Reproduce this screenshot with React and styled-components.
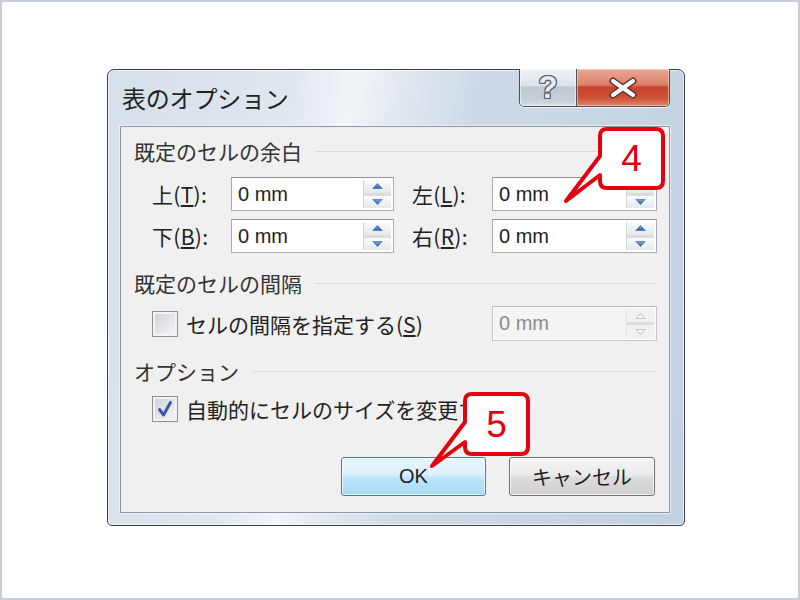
import React from "react";
import styled, { createGlobalStyle } from "styled-components";

const JP = `"Noto Sans CJK JP", "Noto Sans", sans-serif`;
const LAT = `"Liberation Sans", Arial, "Noto Sans CJK JP", sans-serif`;

const Global = createGlobalStyle`
  html, body { margin: 0; padding: 0; background: #fff; }
  #root { width: 800px; height: 600px; }
`;

const Page = styled.div`
  position: relative;
  width: 800px;
  height: 600px;
  box-sizing: border-box;
  border: 2px solid #c7cfdc;
  padding: 67px 0 0 105px;
  background: #fff;
  font-family: ${JP};
  overflow: hidden;
`;

const Window = styled.div`
  width: 578px;
  height: 457px;
  box-sizing: border-box;
  border: 1px solid #3c3f44;
  border-radius: 7px 7px 5px 5px;
  background: linear-gradient(
    100deg,
    #d6e0ea 0%,
    #dfe7ef 28%,
    #f1f5f8 38%,
    #e3eaf1 44%,
    #cfdbe7 56%,
    #c2d1e0 100%
  );
  box-shadow: inset 0 0 0 1px rgba(255, 255, 255, 0.6);
  display: flex;
  flex-direction: column;
  padding: 0 14px 12px 12px;
`;

const TitleBar = styled.div`
  height: 56px;
  display: flex;
  justify-content: space-between;
  align-items: flex-start;
  flex-shrink: 0;
`;

const Title = styled.div`
  margin: 12px 0 0 2px;
  font-size: 24px;
  line-height: 32px;
  color: #222;
  letter-spacing: -0.2px;
`;

const Captions = styled.div`
  display: flex;
  height: 38px;
  margin-top: -1px;
  box-sizing: border-box;
  border: 1px solid #4c5056;
  border-top: none;
  border-radius: 0 0 5px 5px;
  overflow: hidden;
  box-shadow: 0 1px 0 rgba(255, 255, 255, 0.7);
`;

const CaptionButton = styled.div`
  width: ${(p) => p.$w}px;
  display: flex;
  align-items: center;
  justify-content: center;
  background: ${(p) =>
    p.$close
      ? "linear-gradient(#eaa994 0%, #dc806a 42%, #c8432b 50%, #cc5236 78%, #e0866a 100%)"
      : "linear-gradient(#eef2f5 0%, #dce3e9 44%, #bfc8d1 50%, #c7d0d8 85%, #d8dfe6 100%)"};
  box-shadow: inset 0 0 0 1px rgba(255, 255, 255, 0.45);
  & + & {
    border-left: 1px solid #4c5056;
  }
`;

const HelpGlyph = styled.span`
  font-family: ${LAT};
  font-size: 31px;
  font-weight: bold;
  line-height: 1;
  margin-top: -1px;
  color: #e9edf1;
  text-shadow: 1px 0 0 #5a5e63, -1px 0 0 #5a5e63, 0 1px 0 #5a5e63,
    0 -1px 0 #5a5e63, 1px 1px 0 #5a5e63, -1px -1px 0 #5a5e63,
    1px -1px 0 #5a5e63, -1px 1px 0 #5a5e63;
`;

const Client = styled.div`
  flex: 1;
  box-sizing: border-box;
  background: #f0f0f0;
  border: 1px solid #8a96a5;
  box-shadow: 0 0 0 1px rgba(255, 255, 255, 0.55);
  padding: 12px 12px 16px 13px;
  display: flex;
  flex-direction: column;
`;

const Heading = styled.div`
  display: flex;
  align-items: center;
  height: 24px;
  margin-top: ${(p) => p.$mt || 0}px;
  font-size: 21px;
  color: #333;
  white-space: nowrap;
  &::after {
    content: "";
    flex: 1;
    height: 1px;
    background: #d3dce5;
    margin-left: 13px;
  }
`;

const FieldRow = styled.div`
  display: flex;
  align-items: center;
  height: 34px;
  margin-top: ${(p) => p.$mt || 0}px;
  padding-left: 18px;
`;

const FieldLabel = styled.div`
  width: ${(p) => p.$w}px;
  box-sizing: border-box;
  padding-left: ${(p) => p.$pl || 0}px;
  font-size: 21px;
  color: #222;
  white-space: nowrap;
  letter-spacing: 0.3px;
`;

const SpinBox = styled.div`
  width: ${(p) => p.$w}px;
  height: ${(p) => p.$h || 34}px;
  box-sizing: border-box;
  border: 1px solid ${(p) => (p.$disabled ? "#c2c4c8" : "#abadb3")};
  border-top-color: ${(p) => (p.$disabled ? "#b5b8bc" : "#8f949a")};
  background: ${(p) => (p.$disabled ? "#f4f4f4" : "#fff")};
  box-shadow: ${(p) => (p.$disabled ? "inset 0 0 0 1px #fbfbfb" : "none")};
  display: flex;
  margin-left: ${(p) => (p.$push ? "auto" : "0")};
`;

const SpinValue = styled.div`
  flex: 1;
  display: flex;
  align-items: center;
  padding-left: 6px;
  font-family: ${LAT};
  font-size: 20px;
  color: ${(p) => (p.$disabled ? "#8c8c8c" : "#1e1e1e")};
`;

const SpinButtons = styled.div`
  width: 27px;
  margin: 2px 2px 2px 0;
  display: flex;
  flex-direction: column;
  border-left: 1px solid ${(p) => (p.$disabled ? "#e2e2e2" : "#d3d7db")};
`;

const SpinHalf = styled.div`
  flex: 1;
  display: flex;
  align-items: center;
  justify-content: center;
  background: ${(p) =>
    p.$disabled ? "#f1f1f1" : "linear-gradient(#fbfcfd, #e4e8ec)"};
  & + & {
    border-top: 3px solid ${(p) => (p.$disabled ? "#dcdcdc" : "#c3c8cd")};
  }
`;

const CheckRow = styled.div`
  display: flex;
  align-items: center;
  height: ${(p) => p.$h || 34}px;
  margin-top: ${(p) => p.$mt || 0}px;
  padding-left: 18px;
`;

const CheckBox = styled.div`
  width: 26px;
  height: 26px;
  box-sizing: border-box;
  border: 1px solid #8e8f8f;
  background: linear-gradient(135deg, #cbcfd5 0%, #e4e6e9 55%, #f7f7f7 100%);
  box-shadow: inset 0 0 0 2px #f4f4f4;
  display: flex;
  align-items: center;
  justify-content: center;
  flex-shrink: 0;
`;

const CheckText = styled.div`
  margin-left: 8px;
  font-size: 21px;
  color: #222;
  white-space: nowrap;
`;

const ButtonRow = styled.div`
  display: flex;
  justify-content: flex-end;
  gap: 23px;
  margin-top: 31px;
  margin-right: 2px;
`;

const DialogButton = styled.div`
  width: ${(p) => p.$w}px;
  height: 39px;
  box-sizing: border-box;
  border-radius: 3px;
  border: 1px solid ${(p) => (p.$primary ? "#3c7fb1" : "#707070")};
  background: ${(p) =>
    p.$primary
      ? "linear-gradient(#e8f5fc 0%, #dbf1fc 45%, #bee6fd 52%, #a9dbf6 100%)"
      : "linear-gradient(#f4f4f4 0%, #ebebeb 45%, #dddddd 52%, #cfcfcf 100%)"};
  box-shadow: inset 0 0 0 1px rgba(255, 255, 255, 0.7);
  display: flex;
  align-items: center;
  justify-content: center;
  font-family: ${(p) => (p.$latin ? LAT : JP)};
  font-size: 20px;
  color: #1e1e1e;
`;

const CalloutWrap = styled.div`
  position: absolute;
`;

const CalloutNumber = styled.div`
  position: absolute;
  display: flex;
  align-items: center;
  justify-content: center;
  font-family: ${LAT};
  font-size: 37px;
  line-height: 1;
  color: #e3000f;
`;

function Arrow({ up, disabled }) {
  const pts = up ? "0,6 5.5,0 11,6" : "0,0 5.5,6 11,0";
  return (
    <svg width="11" height="6" viewBox="-0.5 -0.5 12 7">
      <defs>
        <linearGradient id={up ? "gu" : "gd"} x1="0" y1="0" x2="0" y2="1">
          <stop offset="0" stopColor="#7aa6e0" />
          <stop offset="1" stopColor="#2d5fb0" />
        </linearGradient>
      </defs>
      <polygon
        points={pts}
        fill={disabled ? "#f4f4f4" : `url(#${up ? "gu" : "gd"})`}
        stroke={disabled ? "#a8a8a8" : "#3a68b4"}
        strokeWidth="0.8"
        strokeLinejoin="round"
      />
    </svg>
  );
}

function Spin({ w, h, disabled, push }) {
  return (
    <SpinBox $w={w} $h={h} $disabled={disabled} $push={push}>
      <SpinValue $disabled={disabled}>0 mm</SpinValue>
      <SpinButtons $disabled={disabled}>
        <SpinHalf $disabled={disabled}>
          <Arrow up disabled={disabled} />
        </SpinHalf>
        <SpinHalf $disabled={disabled}>
          <Arrow disabled={disabled} />
        </SpinHalf>
      </SpinButtons>
    </SpinBox>
  );
}

function Check({ checked }) {
  return (
    <CheckBox>
      {checked && (
        <svg width="18" height="18" viewBox="0 0 18 18">
          <path
            d="M3.5 9.5 L7.5 15 L14.5 2.5"
            fill="none"
            stroke="#3d55a8"
            strokeWidth="3"
            strokeLinecap="round"
            strokeLinejoin="round"
          />
        </svg>
      )}
    </CheckBox>
  );
}

function Callout({ n, box, base, tip }) {
  const pad = 4;
  const left = tip.x - pad;
  const top = box.y - pad;
  const right = box.x + box.w + pad;
  const bottom = Math.max(box.y + box.h, tip.y) + pad;
  const w = right - left;
  const h = bottom - top;
  const r = 7;
  const { x, y } = box;
  const bw = box.w;
  const bh = box.h;
  const d = `M ${x + r} ${y} H ${x + bw - r} Q ${x + bw} ${y} ${x + bw} ${y + r} V ${
    y + bh - r
  } Q ${x + bw} ${y + bh} ${x + bw - r} ${y + bh} H ${x + r} Q ${x} ${y + bh} ${x} ${
    y + bh - r
  } V ${base[1]} L ${tip.x} ${tip.y} L ${x} ${base[0]} V ${y + r} Q ${x} ${y} ${x + r} ${y} Z`;
  return (
    <CalloutWrap style={{ left: left - 2, top: top - 2, width: w, height: h }}>
      <svg width={w} height={h} viewBox={`${left} ${top} ${w} ${h}`} style={{ display: "block" }}>
        <path d={d} fill="#fff" stroke="#e3000f" strokeWidth="4" strokeLinejoin="round" />
      </svg>
      <CalloutNumber
        style={{ left: box.x - left, top: box.y - top, width: bw, height: bh }}
      >
        {n}
      </CalloutNumber>
    </CalloutWrap>
  );
}

export default function App() {
  return (
    <>
      <Global />
      <Page>
        <Window>
          <TitleBar>
            <Title>表のオプション</Title>
            <Captions>
              <CaptionButton $w={56}>
                <HelpGlyph>?</HelpGlyph>
              </CaptionButton>
              <CaptionButton $w={92} $close>
                <svg width="34" height="22" viewBox="0 0 34 22">
                  <path
                    d="M7 4 L27 18 M27 4 L7 18"
                    stroke="#5a2a22"
                    strokeWidth="7"
                    strokeLinecap="round"
                  />
                  <path
                    d="M7 4 L27 18 M27 4 L7 18"
                    stroke="#ffffff"
                    strokeWidth="4.2"
                    strokeLinecap="round"
                  />
                </svg>
              </CaptionButton>
            </Captions>
          </TitleBar>
          <Client>
            <Heading>既定のセルの余白</Heading>
            <FieldRow $mt={14}>
              <FieldLabel $w={79}>
                上(<u>T</u>):
              </FieldLabel>
              <Spin w={163} />
              <FieldLabel $w={98} $pl={18}>
                左(<u>L</u>):
              </FieldLabel>
              <Spin w={165} />
            </FieldRow>
            <FieldRow $mt={8}>
              <FieldLabel $w={79}>
                下(<u>B</u>):
              </FieldLabel>
              <Spin w={163} />
              <FieldLabel $w={98} $pl={18}>
                右(<u>R</u>):
              </FieldLabel>
              <Spin w={165} />
            </FieldRow>
            <Heading $mt={18}>既定のセルの間隔</Heading>
            <CheckRow $mt={11} $h={35}>
              <Check />
              <CheckText>
                セルの間隔を指定する(<u>S</u>)
              </CheckText>
              <Spin w={165} h={35} disabled push />
            </CheckRow>
            <Heading $mt={18}>オプション</Heading>
            <CheckRow $mt={9}>
              <Check checked />
              <CheckText>自動的にセルのサイズを変更する</CheckText>
            </CheckRow>
            <ButtonRow>
              <DialogButton $w={145} $primary $latin>
                OK
              </DialogButton>
              <DialogButton $w={146}>キャンセル</DialogButton>
            </ButtonRow>
          </Client>
        </Window>
        <Callout
          n="4"
          box={{ x: 600, y: 129, w: 63, h: 59 }}
          base={[156, 175]}
          tip={{ x: 566, y: 201 }}
        />
        <Callout
          n="5"
          box={{ x: 465, y: 394, w: 63, h: 60 }}
          base={[422, 442]}
          tip={{ x: 432, y: 466 }}
        />
      </Page>
    </>
  );
}
